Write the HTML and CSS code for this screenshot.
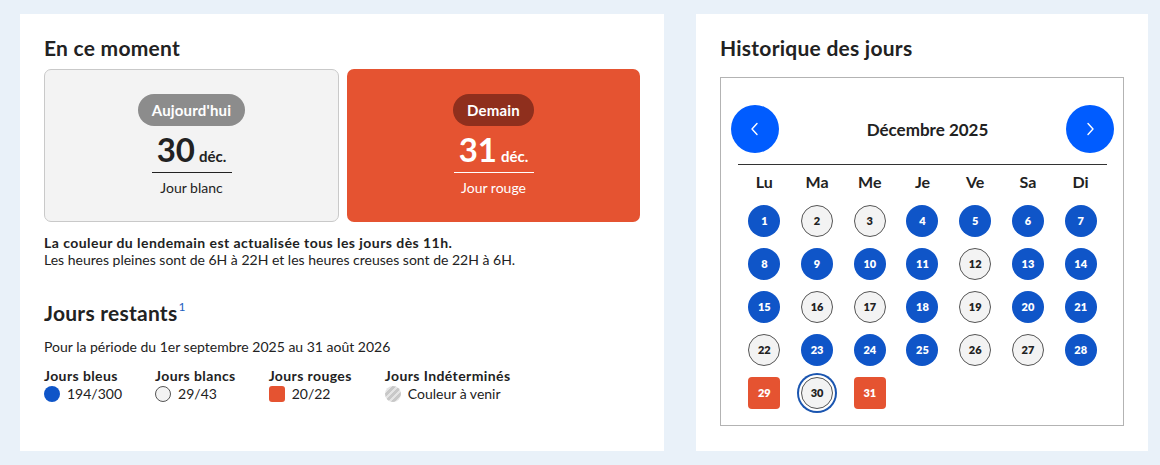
FILE: index.html
```html
<!DOCTYPE html>
<html lang="fr">
<head>
<meta charset="utf-8">
<title>Tempo</title>
<link rel="stylesheet" href="styles.css">
</head>
<body>
<main class="page">
  <section class="panel panel-left">
    <h2 class="title">En ce moment</h2>
    <div class="cards">
      <div class="card card-white">
        <span class="badge badge-grey">Aujourd'hui</span>
        <div class="date"><span class="num">30</span><span class="mon">déc.</span></div>
        <div class="daytype">Jour blanc</div>
      </div>
      <div class="card card-red">
        <span class="badge badge-darkred">Demain</span>
        <div class="date"><span class="num">31</span><span class="mon">déc.</span></div>
        <div class="daytype">Jour rouge</div>
      </div>
    </div>
    <p class="info"><strong>La couleur du lendemain est actualisée tous les jours dès 11h.</strong><br>Les heures pleines sont de 6H à 22H et les heures creuses sont de 22H à 6H.</p>
    <h2 class="title title-rest">Jours restants<sup class="note">1</sup></h2>
    <p class="period">Pour la période du 1er septembre 2025 au 31 août 2026</p>
    <div class="legend">
      <div class="leg">
        <div class="leg-title">Jours bleus</div>
        <div class="leg-val"><span class="ico ico-blue"></span>194/300</div>
      </div>
      <div class="leg">
        <div class="leg-title">Jours blancs</div>
        <div class="leg-val"><span class="ico ico-white"></span>29/43</div>
      </div>
      <div class="leg">
        <div class="leg-title">Jours rouges</div>
        <div class="leg-val"><span class="ico ico-red"></span>20/22</div>
      </div>
      <div class="leg">
        <div class="leg-title">Jours Indéterminés</div>
        <div class="leg-val"><span class="ico ico-undef"></span>Couleur à venir</div>
      </div>
    </div>
  </section>

  <section class="panel panel-right">
    <h2 class="title">Historique des jours</h2>
    <div class="cal">
      <div class="cal-head">
        <button class="nav" aria-label="Mois précédent"><svg width="12" height="14" viewBox="0 0 12 14"><path d="M8 1.5 L3 7 L8 12.5" fill="none" stroke="#fff" stroke-width="1.4" stroke-linecap="round" stroke-linejoin="round"/></svg></button>
        <div class="month">Décembre 2025</div>
        <button class="nav" aria-label="Mois suivant"><svg width="12" height="14" viewBox="0 0 12 14"><path d="M4 1.5 L9 7 L4 12.5" fill="none" stroke="#fff" stroke-width="1.4" stroke-linecap="round" stroke-linejoin="round"/></svg></button>
      </div>
      <div class="cal-line"></div>
      <div class="grid">
        <div class="wd">Lu</div><div class="wd">Ma</div><div class="wd">Me</div><div class="wd">Je</div><div class="wd">Ve</div><div class="wd">Sa</div><div class="wd">Di</div>
        <div class="c"><span class="d b">1</span></div>
        <div class="c"><span class="d w">2</span></div>
        <div class="c"><span class="d w">3</span></div>
        <div class="c"><span class="d b">4</span></div>
        <div class="c"><span class="d b">5</span></div>
        <div class="c"><span class="d b">6</span></div>
        <div class="c"><span class="d b">7</span></div>
        <div class="c"><span class="d b">8</span></div>
        <div class="c"><span class="d b">9</span></div>
        <div class="c"><span class="d b">10</span></div>
        <div class="c"><span class="d b">11</span></div>
        <div class="c"><span class="d w">12</span></div>
        <div class="c"><span class="d b">13</span></div>
        <div class="c"><span class="d b">14</span></div>
        <div class="c"><span class="d b">15</span></div>
        <div class="c"><span class="d w">16</span></div>
        <div class="c"><span class="d w">17</span></div>
        <div class="c"><span class="d b">18</span></div>
        <div class="c"><span class="d w">19</span></div>
        <div class="c"><span class="d b">20</span></div>
        <div class="c"><span class="d b">21</span></div>
        <div class="c"><span class="d w">22</span></div>
        <div class="c"><span class="d b">23</span></div>
        <div class="c"><span class="d b">24</span></div>
        <div class="c"><span class="d b">25</span></div>
        <div class="c"><span class="d w">26</span></div>
        <div class="c"><span class="d w">27</span></div>
        <div class="c"><span class="d b">28</span></div>
        <div class="c"><span class="d r">29</span></div>
        <div class="c"><span class="d w today">30</span></div>
        <div class="c"><span class="d r">31</span></div>
      </div>
    </div>
  </section>
</main>
</body>
</html>
```

FILE: styles.css
```css
* { box-sizing: border-box; }
html, body { margin: 0; padding: 0; }
body {
  background: #e9f1f9;
  font-family: Lato, "Noto Sans", sans-serif;
  color: #222;
  width: 1160px;
  height: 465px;
  overflow: hidden;
}
.page {
  display: flex;
  gap: 32px;
  padding: 14px 12px 14px 20px;
  align-items: stretch;
  height: 465px;
}
.panel {
  background: #fff;
  padding: 22px 24px 0 24px;
}
.panel-left { width: 644px; }
.panel-right { width: 452px; }
.title {
  margin: 0;
  font-size: 21px;
  line-height: 24px;
  font-weight: 700;
  color: #222;
  letter-spacing: 0.25px;
}
.cards {
  display: flex;
  gap: 8px;
  margin-top: 9px;
}
.card {
  flex: 1;
  height: 153px;
  border-radius: 7px;
  display: flex;
  flex-direction: column;
  align-items: center;
  padding-top: 24px;
}
.card-white { background: #f3f3f3; border: 1px solid #c9c9c9; }
.card-red { background: #e55331; color: #fff; padding-top: 25px; }
.badge {
  display: inline-block;
  height: 32px;
  line-height: 32px;
  padding: 0 14px;
  border-radius: 16px;
  font-size: 15px;
  font-weight: 700;
  color: #fff;
  letter-spacing: 0.2px;
}
.badge-grey { background: #8c8c8c; }
.badge-darkred { background: #8f2f1d; }
.date {
  margin-top: 3px;
  width: 80px;
  display: flex;
  justify-content: center;
  align-items: baseline;
  gap: 4px;
  border-bottom: 1px solid #222;
  height: 44px;
  line-height: 40px;
}
.card-red .date { border-bottom-color: #fff; }
.num { font-size: 33px; font-weight: 700; }
.mon { font-size: 15px; font-weight: 700; }
.daytype { margin-top: 6px; font-size: 14px; line-height: 17px; }
.info {
  margin: 12px 0 0;
  font-size: 14px;
  line-height: 17px;
}
.info strong { letter-spacing: 0.45px; }
.title-rest { margin-top: 33px; }
.note {
  font-size: 12px;
  color: #1f5fbf;
  font-weight: 400;
  vertical-align: top;
  position: relative;
  top: -6px;
  margin-left: 1px;
}
.period {
  margin: 13px 0 0;
  font-size: 14px;
  line-height: 17px;
}
.legend {
  display: flex;
  gap: 33px;
  margin-top: 12px;
}
.leg-title { font-size: 14px; font-weight: 700; line-height: 17px; letter-spacing: 0.4px; }
.leg-val {
  display: flex;
  align-items: center;
  gap: 7px;
  font-size: 14px;
  line-height: 18px;
  margin-top: 1px;
}
.ico { width: 16px; height: 16px; border-radius: 50%; flex: none; }
.ico-blue { background: #0f55c8; }
.ico-white { background: #f3f3f3; border: 1px solid #555; }
.ico-red { background: #e55331; border-radius: 3px; }
.ico-undef {
  background: repeating-linear-gradient(135deg, #c8c8c8 0 3px, #e4e4e4 3px 5px);
}

/* calendar */
.cal {
  margin-top: 17px;
  border: 1px solid #b3b3b3;
  height: 349px;
  padding: 27px 9px 0 10px;
}
.cal-head {
  display: flex;
  align-items: center;
  justify-content: space-between;
  height: 48px;
}
.nav {
  width: 48px;
  height: 48px;
  border-radius: 50%;
  border: none;
  background: #005cff;
  display: flex;
  align-items: center;
  justify-content: center;
  padding: 0;
}
.month {
  font-size: 17px;
  font-weight: 700;
  padding-left: 10px;
}
.cal-line {
  margin: 11px 7px 0 7px;
  height: 1px;
  background: #333;
}
.grid {
  margin: 0 7px;
  display: grid;
  grid-template-columns: repeat(7, 1fr);
  grid-template-rows: 34px;
  grid-auto-rows: 43px;
}
.wd {
  text-align: center;
  font-size: 16px;
  font-weight: 700;
  line-height: 34px;
}
.c { display: flex; align-items: center; justify-content: center; }
.d {
  width: 32px;
  height: 32px;
  border-radius: 50%;
  display: flex;
  align-items: center;
  justify-content: center;
  font-size: 11px;
  font-weight: 800;
}
.d.b { background: #0f55c8; color: #fff; }
.d.w { background: #f3f3f3; border: 1px solid #555; color: #222; }
.d.r { background: #e55331; color: #fff; border-radius: 4px; }
.d.today { box-shadow: 0 0 0 2px #fff, 0 0 0 4px #1a55b0; }
```
